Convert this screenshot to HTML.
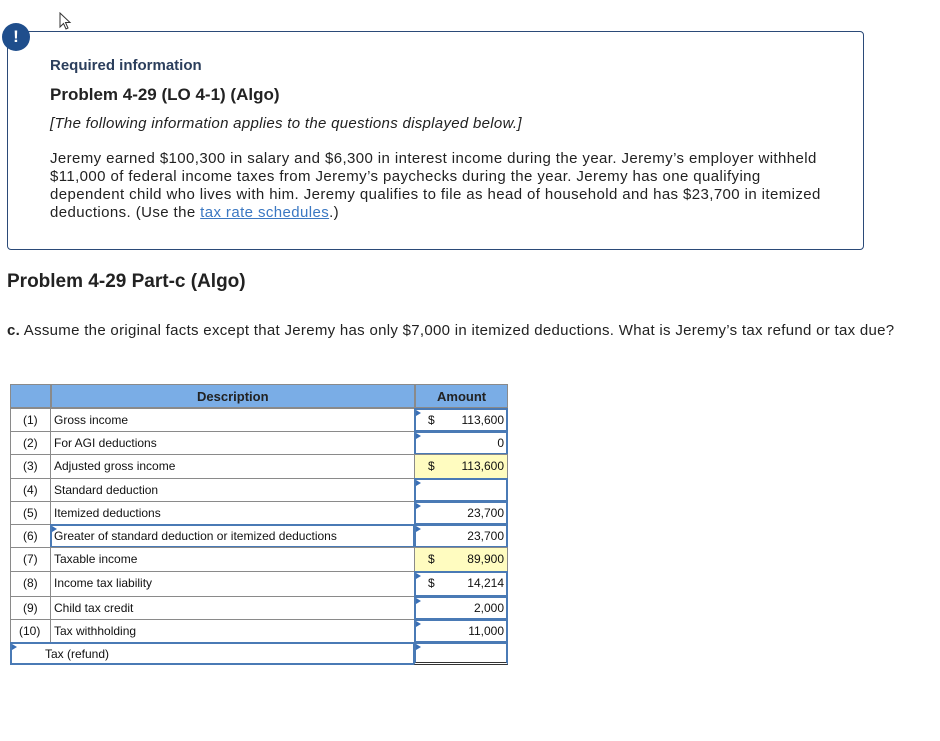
<!DOCTYPE html>
<html><head><meta charset="utf-8"><style>
*{margin:0;padding:0;box-sizing:border-box}
body{width:940px;height:741px;background:#fff;font-family:"Liberation Sans",sans-serif;color:#1a1a1a;position:relative;overflow:hidden}
.a{position:absolute;white-space:nowrap}
.box{position:absolute;left:7px;top:31px;width:857px;height:219px;border:1px solid #2b4a78;border-radius:4px}
.bang{position:absolute;left:2px;top:23px;width:28px;height:28px;border-radius:50%;background:#1f4e8c;color:#fff;font-weight:bold;font-size:17px;text-align:center;line-height:28px}
.p{font-size:15px;color:#222;letter-spacing:0.4px}
.t{position:absolute;font-size:12px;color:#111;white-space:nowrap}
.hl{position:absolute;background:#7aade6}
.c{position:absolute;border:1px solid #8a8a8a}
.in{position:absolute;border:2px solid #4a7ab5;background:#fff}
.y{background:#fffcc0}
.tri{position:absolute;width:0;height:0;border-top:3px solid transparent;border-bottom:3px solid transparent;border-left:5px solid #3a6fb5}
</style></head><body>
<svg class="a" style="left:59px;top:12px" width="14" height="20" viewBox="0 0 14 20"><path d="M1 1 L1 15 L4.5 11.5 L7 17 L9 16 L6.5 10.5 L11 10.5 Z" fill="#fff" stroke="#333" stroke-width="1"/></svg>
<div class="box"></div>
<div class="bang">!</div>
<div class="a" style="left:50px;top:57px;font-size:15px;font-weight:bold;color:#2b3e5c">Required information</div>
<div class="a" style="left:50px;top:85px;font-size:17px;font-weight:bold;color:#222">Problem 4-29 (LO 4-1) (Algo)</div>
<div class="a" style="left:50px;top:115px;font-size:15px;font-style:italic;color:#222;letter-spacing:0.3px">[The following information applies to the questions displayed below.]</div>
<div class="a p" style="left:50px;top:150px">Jeremy earned $100,300 in salary and $6,300 in interest income during the year. Jeremy’s employer withheld</div>
<div class="a p" style="left:50px;top:168px">$11,000 of federal income taxes from Jeremy’s paychecks during the year. Jeremy has one qualifying</div>
<div class="a p" style="left:50px;top:186px">dependent child who lives with him. Jeremy qualifies to file as head of household and has $23,700 in itemized</div>
<div class="a p" style="left:50px;top:204px">deductions. (Use the <span style="color:#3b78c2;text-decoration:underline">tax rate schedules</span>.)</div>
<div class="a" style="left:7px;top:271px;font-size:19px;font-weight:bold;color:#222">Problem 4-29 Part-c (Algo)</div>
<div class="a p" style="left:7px;top:322px;letter-spacing:0.3px"><b>c.</b> Assume the original facts except that Jeremy has only $7,000 in itemized deductions. What is Jeremy’s tax refund or tax due?</div>

<div class="hl" style="left:10px;top:384px;width:498px;height:24px;border:1px solid #8a8a8a"></div>
<div class="c" style="left:50px;top:384px;width:1px;height:24px"></div>
<div class="c" style="left:414px;top:384px;width:1px;height:24px"></div>
<div class="t" style="left:197px;top:389px;font-weight:bold;font-size:13px;color:#222">Description</div>
<div class="t" style="left:437px;top:389px;font-weight:bold;font-size:13px;color:#222">Amount</div>

<div id="rows"></div>
<script>
var rows=[["(1)","Gross income","$","113,600",408,0],["(2)","For AGI deductions","","0",431,0],["(3)","Adjusted gross income","$","113,600",454,1],["(4)","Standard deduction","","",478,0],["(5)","Itemized deductions","","23,700",501,0],["(6)","Greater of standard deduction or itemized deductions","","23,700",524,0],["(7)","Taxable income","$","89,900",547,1],["(8)","Income tax liability","$","14,214",571,0],["(9)","Child tax credit","","2,000",596,0],["(10)","Tax withholding","","11,000",619,0]];
var h="";var ends=[431,454,478,501,524,547,571,596,619,642];
rows.forEach(function(r,i){var y=r[4],hh=ends[i]-y;
h+='<div class="c" style="left:10px;top:'+y+'px;width:41px;height:'+(hh+1)+'px"></div>';
if(i==5){h+='<div class="in" style="left:50px;top:'+y+'px;width:365px;height:'+(hh+1)+'px;border-width:2px"></div><div class="tri" style="left:52px;top:'+(y+2)+'px"></div>';}
else h+='<div class="c" style="left:50px;top:'+y+'px;width:365px;height:'+(hh+1)+'px"></div>';
if(r[5]) h+='<div class="c y" style="left:414px;top:'+y+'px;width:94px;height:'+(hh+1)+'px"></div>';
else h+='<div class="in" style="left:414px;top:'+y+'px;width:94px;height:'+(hh+1)+'px"></div><div class="tri" style="left:416px;top:'+(y+2)+'px"></div>';
h+='<div class="t" style="left:'+(i==9?19:23)+'px;top:'+(y+5)+'px">'+r[0]+'</div>';
h+='<div class="t" style="left:54px;top:'+(y+5)+'px">'+r[1]+'</div>';
if(r[2])h+='<div class="t" style="left:428px;top:'+(y+5)+'px">$</div>';
h+='<div class="t" style="right:'+(940-504)+'px;top:'+(y+5)+'px">'+r[3]+'</div>';
});
h+='<div class="in" style="left:10px;top:642px;width:405px;height:23px"></div><div class="tri" style="left:12px;top:644px"></div>';
h+='<div class="t" style="left:45px;top:647px">Tax (refund)</div>';
h+='<div class="in" style="left:414px;top:642px;width:94px;height:23px;border-bottom:3px double #333"></div><div class="tri" style="left:416px;top:644px"></div>';
document.getElementById("rows").innerHTML=h;
</script>
</body></html>
